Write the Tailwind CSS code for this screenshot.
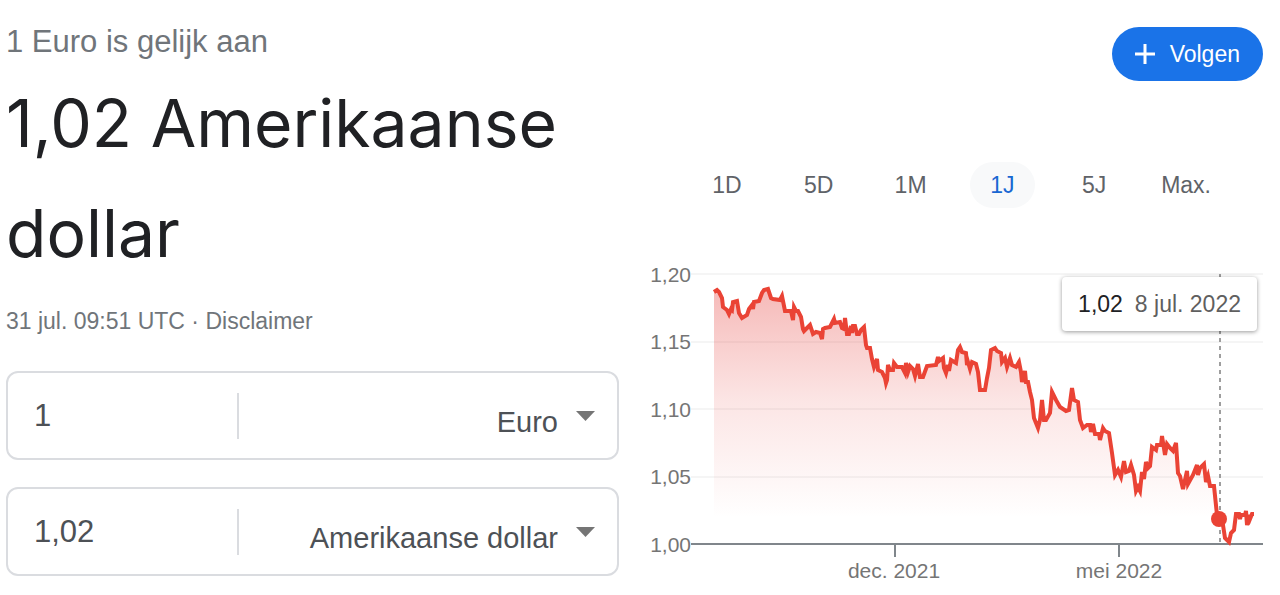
<!DOCTYPE html>
<html lang="nl">
<head>
    <meta charset="UTF-8">
    <meta name="viewport" content="width=device-width, initial-scale=1.0">
    <title>1 Euro is gelijk aan 1,02 Amerikaanse dollar</title>
    <script src="https://cdn.jsdelivr.net/npm/@tailwindcss/browser@4"></script>
</head>
<body class="bg-white font-['Liberation_Sans',Arial,sans-serif] text-[#70757a]">

    <main class="grid grid-cols-2">

        <!-- Converter -->
        <section class="pl-[6px] pr-[21px] pt-[22px]">
            <p class="text-[31px] leading-10">1 Euro is gelijk aan</p>
            <h1 class="mt-[6px] font-['Inter',sans-serif] text-[66px] leading-[110px] text-[#202124]">1,02 Amerikaanse dollar</h1>
            <p class="mt-[18px] text-[23px] leading-[30px]">31 jul. 09:51 UTC · <a href="#disclaimer">Disclaimer</a></p>

            <form class="mt-[35px] flex flex-col gap-[27px]">
                <div class="relative flex h-[89px] items-center rounded-xl border-2 border-[#dadce0] text-[#4d5156]">
                    <input type="text" aria-label="Bedrag in euro" value="1" class="h-full w-[229px] pl-[26px] text-[31px] outline-none">
                    <span class="h-[46px] w-[2px] bg-[#dadce0]"></span>
                    <select aria-label="Van valuta" class="h-full min-w-0 flex-1 appearance-none pr-[59px] pt-[14px] text-[29px] [text-align-last:right] outline-none">
                        <option>Euro</option>
                        <option>Amerikaanse dollar</option>
                    </select>
                    <svg class="pointer-events-none absolute right-[22px] h-[10px] w-[19px]" viewBox="0 0 19 10"><path d="M0 0h19l-9.500 10z" fill="#757575"/></svg>
                </div>
                <div class="relative flex h-[89px] items-center rounded-xl border-2 border-[#dadce0] text-[#4d5156]">
                    <input type="text" aria-label="Bedrag in dollar" value="1,02" class="h-full w-[229px] pl-[26px] text-[31px] outline-none">
                    <span class="h-[46px] w-[2px] bg-[#dadce0]"></span>
                    <select aria-label="Naar valuta" class="h-full min-w-0 flex-1 appearance-none pr-[59px] pt-[14px] text-[29px] [text-align-last:right] outline-none">
                        <option>Amerikaanse dollar</option>
                        <option>Euro</option>
                    </select>
                    <svg class="pointer-events-none absolute right-[22px] h-[10px] w-[19px]" viewBox="0 0 19 10"><path d="M0 0h19l-9.500 10z" fill="#757575"/></svg>
                </div>
            </form>
        </section>

        <!-- Chart -->
        <section class="pt-[27px]">
            <div class="flex justify-end pr-[17px]">
                <button type="button" class="flex h-[54px] items-center gap-[15px] rounded-full bg-[#1a73e8] pl-[23px] pr-[23px] text-[23px] text-white">
                    <svg class="h-5 w-5" viewBox="0 0 20 20"><path d="M10 0v20M0 10h20" stroke="currentColor" stroke-width="3"/></svg>
                    Volgen
                </button>
            </div>

            <div class="ml-[41px] mr-[48px] mt-[81px] grid grid-cols-6 justify-items-center text-[23px] text-[#5f6368]">
                <button type="button" class="h-[46px] w-[65px] rounded-full">1D</button>
                <button type="button" class="h-[46px] w-[65px] rounded-full">5D</button>
                <button type="button" class="h-[46px] w-[65px] rounded-full">1M</button>
                <button type="button" class="h-[46px] w-[65px] rounded-full bg-[#f8f9fa] text-[#1967d2]">1J</button>
                <button type="button" class="h-[46px] w-[65px] rounded-full">5J</button>
                <button type="button" class="h-[46px] w-[65px] rounded-full">Max.</button>
            </div>

            <div class="relative mt-[47px]">
                <svg class="block w-full" viewBox="640 255 640 335" role="img" aria-label="Koers over 1 jaar">
                    <defs>
                        <linearGradient id="fade" gradientUnits="userSpaceOnUse" x1="0" y1="284" x2="0" y2="518">
                            <stop offset="0" stop-color="#e53935" stop-opacity=".36"/>
                            <stop offset=".5" stop-color="#e53935" stop-opacity=".13"/>
                            <stop offset="1" stop-color="#e53935" stop-opacity="0"/>
                        </linearGradient>
                    </defs>

                    <path d="M691 274H1263M691 342H1263M691 409H1263M691 477H1263" stroke="#f5f5f5" stroke-width="2"/>
                    <path id="area" fill="url(#fade)"/>
                    <path d="M691 544H1263M895 544V557M1119 544V557" fill="none" stroke="#80868b" stroke-width="2"/>
                    <path d="M1220 274V543" stroke="#9e9e9e" stroke-width="2" stroke-dasharray="4 4"/>
                    <path id="line" fill="none" stroke="#ea4335" stroke-width="4"/>
                    <circle cx="1219" cy="519" r="8" fill="#ea4335"/>

                    <g fill="#757575" font-size="21" text-anchor="end">
                        <text x="691" y="282">1,20</text>
                        <text x="691" y="349">1,15</text>
                        <text x="691" y="417">1,10</text>
                        <text x="691" y="484">1,05</text>
                        <text x="691" y="552">1,00</text>
                    </g>
                    <g fill="#757575" font-size="21" text-anchor="middle">
                        <text x="894" y="578">dec. 2021</text>
                        <text x="1119" y="578">mei 2022</text>
                    </g>
                </svg>

                <div class="absolute right-[23px] top-[22px] flex h-[54px] items-center gap-3 whitespace-nowrap rounded-sm bg-white px-4 text-[23px] text-[#5f5f5f] shadow-[0_1px_4px_rgba(0,0,0,0.4)]">
                    <span class="text-[#202124]">1,02</span>
                    <span>8 jul. 2022</span>
                </div>
            </div>
        </section>
    </main>

    <script>
        const points = [
            '714,292 717,290 719,292 722,298 723,307 727,310 729,314 731,309 732,310 733,302 737,301 739,313 742,318 747,315 749,309 752,305 753,309 754,302 759,301 762,293 764,290 768,289 771,298 773,299 780,300 782,296 785,311 791,311 793,320 794,307 796,311 798,311 801,317 803,329 804,331 807,328 810,325 813,334 816,332 820,333 822,339 823,329 825,328 830,327',
            '834,319 835,323 840,322 842,328 844,329 845,318 847,334 849,334 851,326 852,333 853,326 855,326 857,334 859,334 861,330 864,327 866,345 867,348 870,348 872,359 874,367 877,359 878,370 882,372 885,378 886,383 887,380 888,365 890,370 893,370 894,363 897,367 902,367 905,373 906,363 908,372 910,366 913,369 915,376 918,364 920,377 923,377 927,366 936,365 938,357 939,361 943,358 944,368 946,373 948,365 949,371 951,360 956,363 958,350 960,347 962,352',
            '966,353 967,365 968,362 970,369 972,362 976,364 978,372 980,390 985,390 987,378 989,368 991,350 995,348 997,351 1001,353 1002,362 1005,358 1007,367 1010,358 1012,365 1016,367 1019,362 1021,372 1022,382 1025,371 1026,382 1028,382 1030,392 1032,400 1034,418 1038,428 1040,420 1042,400 1044,420 1046,420 1050,413 1052,392 1056,400 1060,407 1066,411 1069,410 1072,388 1074,400 1078,402 1080,420',
            '1083,428 1087,425 1090,425 1091,432 1093,424 1095,434 1099,434 1100,440 1103,428 1105,431 1109,433 1112,453 1115,475 1118,470 1121,477 1124,461 1126,472 1129,471 1131,465 1134,475 1136,491 1138,487 1140,491 1142,472 1144,479 1146,462 1148,468 1150,466 1152,447 1156,450 1157,445 1161,445 1162,436 1165,455 1167,444 1170,448 1173,451 1176,443 1178,473 1180,476 1183,489 1187,471 1188,484 1193,475 1197,465 1198,475 1200,468 1204,464 1206,482 1208,476 1210,486 1214,486',
            '1217,515 1219,519 1223,525 1225,538 1229,542 1231,533 1234,530 1236,514 1239,514 1240,519 1241,515 1245,515 1246,511 1247,525 1249,515 1250,519 1252,514 1254,514'
        ].join(' ');
        document.getElementById('line').setAttribute('d', 'M' + points);
        document.getElementById('area').setAttribute('d', 'M' + points + ' V544 H714 Z');
    </script>
</body>
</html>
